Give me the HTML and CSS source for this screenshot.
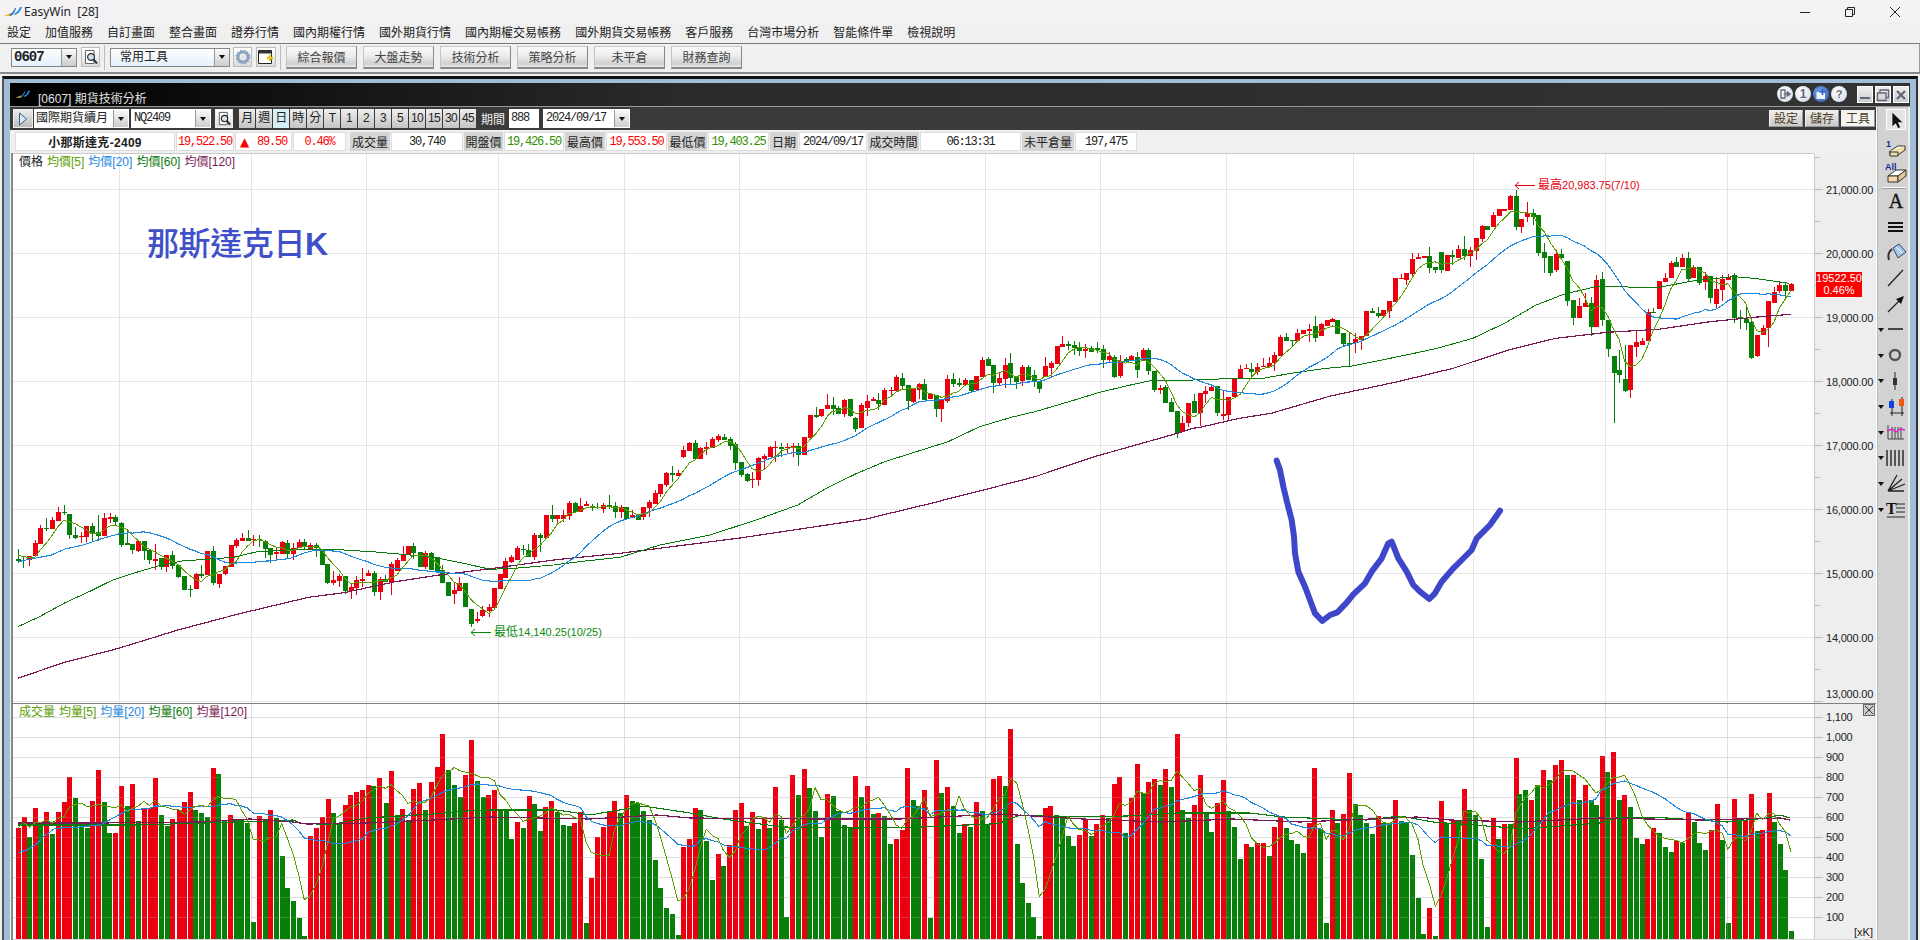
FILE: index.html
```html
<!DOCTYPE html>
<html lang="zh-Hant">
<head>
<meta charset="utf-8">
<title>EasyWin</title>
<link rel="stylesheet" href="styles.css">
</head>
<body>
<div class="app">
  <header class="titlebar">
    <svg class="logo" viewBox="0 0 20 10" width="20" height="10"><path d="M1 9 L8 6 L7 9 Z" fill="#e8b820"/><path d="M6 8 Q10 6 12 1 L13 1 Q12 6 8 9 Z" fill="#2a6fc0"/><path d="M11 7 Q15 5 17 0 L19 0 Q17 6 12 8 Z" fill="#1f8fe0"/></svg>
    <span class="app-name">EasyWin  [28]</span>
    <div class="sys-btns">
      <svg viewBox="0 0 12 12" width="12" height="12"><path d="M1 6.5H11" stroke="#222" stroke-width="1"/></svg>
      <svg viewBox="0 0 12 12" width="12" height="12"><path d="M1.5 3.5H8.5V10.5H1.5Z M3.5 3.5V1.5H10.5V8.5H8.5" fill="none" stroke="#222" stroke-width="1"/></svg>
      <svg viewBox="0 0 12 12" width="12" height="12"><path d="M1 1L11 11M11 1L1 11" stroke="#222" stroke-width="1"/></svg>
    </div>
  </header>
  <nav class="menubar">
    <span>設定</span><span>加值服務</span><span>自訂畫面</span><span>整合畫面</span><span>證券行情</span><span>國內期權行情</span><span>國外期貨行情</span><span>國內期權交易帳務</span><span>國外期貨交易帳務</span><span>客戶服務</span><span>台灣市場分析</span><span>智能條件單</span><span>檢視說明</span>
  </nav>
  <div class="toolbar">
    <div class="combo code"><span class="combo-text">0607</span><span class="dd"></span></div>
    <span class="icon-btn"><svg viewBox="0 0 16 16" width="16" height="16"><path d="M2.5 1.5H11V14.5H2.5Z" fill="#fff" stroke="#666"/><circle cx="8" cy="8" r="3.4" fill="#cfe3f5" stroke="#333" stroke-width="1.2"/><path d="M10.5 10.5L14 14.5" stroke="#333" stroke-width="2"/></svg></span>
    <span class="sep"></span>
    <div class="combo tools"><span class="combo-text">常用工具</span><span class="dd"></span></div>
    <span class="icon-btn gear"><svg viewBox="0 0 16 16" width="16" height="16"><circle cx="8" cy="8" r="5" fill="none" stroke="#8fa5bd" stroke-width="3"/><circle cx="8" cy="8" r="6.6" fill="none" stroke="#8fa5bd" stroke-width="1.6" stroke-dasharray="2 1.5"/><circle cx="8" cy="8" r="2.2" fill="#dbe6f0"/></svg></span>
    <span class="icon-btn cal"><svg viewBox="0 0 18 16" width="18" height="16"><path d="M1.5 1.5H14.5V14.5H1.5Z" fill="#fff" stroke="#222"/><path d="M1.5 1.5H14.5V4.5H1.5Z" fill="#333"/><path d="M13 6V12M10 9H16" stroke="#e8c020" stroke-width="2.4"/></svg></span>
    <span class="sep"></span>
    <div class="tool-buttons">
      <button class="tbtn">綜合報價</button><button class="tbtn">大盤走勢</button><button class="tbtn">技術分析</button><button class="tbtn">策略分析</button><button class="tbtn">未平倉</button><button class="tbtn">財務查詢</button>
    </div>
  </div>
  <main class="mdi">
    <div class="frame">
      <section class="window">
        <div class="win-title">
          <svg class="logo" viewBox="0 0 20 10" width="16" height="9"><path d="M1 9 L8 6 L7 9 Z" fill="#e8b820"/><path d="M6 8 Q10 6 12 1 L13 1 Q12 6 8 9 Z" fill="#2a6fc0"/><path d="M11 7 Q15 5 17 0 L19 0 Q17 6 12 8 Z" fill="#1f8fe0"/></svg>
          <span class="win-name">[0607] 期貨技術分析</span>
          <div class="round-btns">
            <span class="rnd"><svg viewBox="0 0 12 12" width="12" height="12"><path d="M2 2H6V10H2Z" fill="none" stroke="#667" stroke-width="1.3"/><path d="M4.5 6H8V3.5L11.5 6L8 8.5V6" fill="#667" stroke="#667"/></svg></span>
            <span class="rnd num-b">1</span>
            <span class="rnd blue"><svg viewBox="0 0 12 12" width="12" height="12"><path d="M1.5 4H10V11H1.5Z" fill="#fff" opacity=".9"/><path d="M7.5 1V7M4.5 4H10.5" stroke="#2a62c0" stroke-width="1.6"/></svg></span>
            <span class="rnd num-b q">?</span>
          </div>
          <div class="win-btns">
            <span class="wbtn"><svg viewBox="0 0 14 14" width="14" height="14"><path d="M2 10H12" stroke="#667" stroke-width="2"/></svg></span>
            <span class="wbtn"><svg viewBox="0 0 14 14" width="14" height="14"><path d="M1.5 5H10V12.5H1.5Z M4 5V2H12.5V9.5H10" fill="none" stroke="#667" stroke-width="1.3"/></svg></span>
            <span class="wbtn"><svg viewBox="0 0 14 14" width="14" height="14"><path d="M3 3L11 11M11 3L3 11" stroke="#667" stroke-width="2.2"/></svg></span>
          </div>
        </div>
        <div class="win-body">
          <div class="work">
            <div class="dark-bar">
              <span class="play"><svg viewBox="0 0 10 14" width="10" height="14"><path d="M1.5 1L8.5 7L1.5 13Z" fill="#dce8f5" stroke="#3a5f90"/></svg></span>
              <div class="combo dk market"><span class="combo-text">國際期貨續月</span><span class="dd"></span></div>
              <div class="combo dk symbol"><span class="combo-text">NQ2409</span><span class="dd"></span></div>
              <span class="icon-btn small"><svg viewBox="0 0 16 16" width="15" height="15"><path d="M2.5 1.5H11V14.5H2.5Z" fill="#fff" stroke="#555"/><circle cx="8" cy="8" r="3.4" fill="#cfe3f5" stroke="#222" stroke-width="1.2"/><path d="M10.5 10.5L14 14.5" stroke="#222" stroke-width="2"/></svg></span>
              <div class="periods">
                <span class="per">月</span><span class="per">週</span><span class="per on">日</span><span class="per">時</span><span class="per">分</span><span class="per">T</span><span class="per">1</span><span class="per">2</span><span class="per">3</span><span class="per">5</span><span class="per">10</span><span class="per">15</span><span class="per">30</span><span class="per">45</span>
              </div>
              <span class="range-label">期間</span>
              <span class="field count">888</span>
              <div class="combo dk date"><span class="combo-text">2024/09/17</span><span class="dd"></span></div>
              <div class="bar-actions">
                <span class="act">設定</span><span class="act">儲存</span><span class="act on">工具</span>
              </div>
            </div>
            <div class="info">
              <span class="val name">小那斯達克-2409</span>
              <span class="val num up">19,522.50</span>
              <span class="val num up"><i class="tri">▲</i> 89.50</span>
              <span class="val num up">0.46%</span>
              <span class="lab first">成交量</span>
              <span class="val num">30,740</span>
              <span class="lab">開盤價</span>
              <span class="val num dn">19,426.50</span>
              <span class="lab">最高價</span>
              <span class="val num up">19,553.50</span>
              <span class="lab">最低價</span>
              <span class="val num dn">19,403.25</span>
              <span class="lab">日期</span>
              <span class="val num">2024/09/17</span>
              <span class="lab">成交時間</span>
              <span class="val num">06:13:31</span>
              <span class="lab">未平倉量</span>
              <span class="val num">197,475</span>
            </div>
            <div class="charts">
              <div class="pane price">
                <svg id="priceChart" class="chart" viewBox="13 153 1863 551" width="1863" height="551"></svg>
                <div class="legend"><span class="k">價格</span><span class="c5">均價[5]</span><span class="c20">均價[20]</span><span class="c60">均價[60]</span><span class="c120">均價[120]</span></div>
                <div class="big-title">那斯達克日<b>K</b></div>
                <div class="tag">19522.50<br>0.46%</div>
              </div>
              <div class="pane volume">
                <svg id="volumeChart" class="chart" viewBox="13 704 1863 236" width="1863" height="236"></svg>
                <div class="legend vol"><span class="c5">成交量</span><span class="c5">均量[5]</span><span class="c20">均量[20]</span><span class="c60">均量[60]</span><span class="c120">均量[120]</span></div>
                <span class="pane-close"><svg viewBox="0 0 10 10" width="10" height="10"><path d="M1 1L9 9M9 1L1 9" stroke="#333"/></svg></span>
                <span class="unit">[xK]</span>
              </div>
            </div>
          </div>
          <aside class="panel">
            <span class="tool pick"><svg viewBox="0 0 20 20" width="20" height="20"><path d="M6 2V17L9.6 13.6L12.4 19L14.6 18L12 12.6H17Z" fill="#111"/></svg></span>
            <span class="tool"><svg viewBox="0 0 24 22" width="24" height="22"><text x="2" y="9" class="ic-t">1</text><path d="M6 13L14 8H21L14 14H6Z" fill="#fff" stroke="#333"/><path d="M6 13V17H14L21 12V8" fill="#f1dfa8" stroke="#333"/><path d="M6 14H14V18H6Z" fill="#f1dfa8" stroke="#333"/></svg></span>
            <span class="tool mid"><svg viewBox="0 0 24 22" width="24" height="22"><text x="1" y="8" class="ic-t">All</text><path d="M4 14L12 8H22L14 14Z" fill="#fff" stroke="#333"/><path d="M4 14H14V20H4Z" fill="#f6d9b0" stroke="#333"/><path d="M14 14L22 8V14L14 20Z" fill="#e8c898" stroke="#333"/></svg></span>
            <span class="tool-sep"></span>
            <span class="tool"><svg viewBox="0 0 24 22" width="24" height="22"><text x="12" y="18" text-anchor="middle" class="ic-a">A</text></svg></span>
            <span class="tool"><svg viewBox="0 0 24 22" width="24" height="22"><rect x="4" y="6" width="15" height="2" fill="#111"/><rect x="4" y="10" width="15" height="2" fill="#111"/><rect x="4" y="14" width="15" height="2" fill="#111"/></svg></span>
            <span class="tool"><svg viewBox="0 0 24 22" width="24" height="22"><path d="M9 6L15 2L22 10L14 16Z" fill="#a8c8f0" stroke="#345"/><path d="M12 5L18 11" stroke="#fff"/><path d="M8 7Q3 11 5 18" fill="none" stroke="#333" stroke-width="2"/></svg></span>
            <span class="tool"><svg viewBox="0 0 24 22" width="24" height="22"><path d="M4 19L19 3" stroke="#222" stroke-width="1.2"/></svg></span>
            <span class="tool"><svg viewBox="0 0 24 22" width="24" height="22"><path d="M4 19L17 6" stroke="#222" stroke-width="1.2"/><path d="M20 3L12 6L17 11Z" fill="#111"/></svg></span>
            <span class="tool dropdown"><svg viewBox="0 0 24 22" width="24" height="22"><path d="M4 10H19" stroke="#222" stroke-width="1.6"/></svg></span>
            <span class="tool dropdown"><svg viewBox="0 0 24 22" width="24" height="22"><circle cx="11" cy="11" r="5" fill="none" stroke="#555" stroke-width="2.4"/></svg></span>
            <span class="tool dropdown"><svg viewBox="0 0 24 22" width="24" height="22"><path d="M11 2V20" stroke="#222"/><rect x="9" y="8" width="4" height="7" fill="#333"/></svg></span>
            <span class="tool dropdown"><svg viewBox="0 0 24 22" width="24" height="22"><path d="M8 3V14M18 1V14" stroke="#222"/><rect x="5" y="5" width="5" height="7" fill="#1540e0"/><rect x="15" y="3" width="5" height="7" fill="#f05a10"/><path d="M6 17H20M8 14V20M18 14V20" fill="none" stroke="#222"/></svg></span>
            <span class="tool dropdown"><svg viewBox="0 0 24 22" width="24" height="22"><path d="M4 4V18H20M8 6V18M11 6V18M14 6V18M17 6V18" fill="none" stroke="#444"/><path d="M3 10L8 8L12 11L16 8L21 9" fill="none" stroke="#e020d0" stroke-width="1.4"/></svg></span>
            <span class="tool dropdown"><svg viewBox="0 0 24 22" width="24" height="22"><path d="M4 3V19M8 3V19M12 3V19M16 3V19M20 3V19" stroke="#222" stroke-width="1.4" transform="translate(-1 0)"/></svg></span>
            <span class="tool dropdown"><svg viewBox="0 0 24 22" width="24" height="22"><path d="M4 18H20M4 18L13 2M4 18L18 6M4 18L21 11" stroke="#222" stroke-width="1.3"/></svg></span>
            <span class="tool dropdown"><svg viewBox="0 0 24 22" width="24" height="22"><text x="2" y="16" class="ic-tt">T</text><path d="M12 6H21M12 10H21M12 14H21M3 19H21" stroke="#222"/></svg></span>
          </aside>
        </div>
      </section>
    </div>
  </main>
</div>
<script src="chart.js"></script>
</body>
</html>
```
FILE: styles.css
```css
* { box-sizing: border-box; }
html, body { margin: 0; padding: 0; height: 940px; overflow: hidden; }
body { font: 12px "Liberation Sans", "Noto Sans CJK TC", sans-serif; color: #222; background: #f0f0f0; }
.app { display: flex; flex-direction: column; width: 1920px; height: 940px; }

.titlebar { height: 23px; display: flex; align-items: center; padding-left: 3px; background: #f4f2f4; }
.app-name { margin-left: 1px; white-space: pre; font: 12px "Noto Sans", sans-serif; color: #222; }
.sys-btns { margin-left: auto; display: flex; gap: 33px; padding-right: 19px; }

.menubar { height: 20px; display: flex; align-items: center; gap: 14px; padding-left: 7px; background: #f0f0f0; color: #222; }
.menubar span { line-height: 20px; }

.toolbar { height: 29px; display: flex; align-items: center; padding: 0 0 2px 11px; border-top: 1px solid #777; border-right: 1px solid #999; background: #f0f0f0; }
.combo { display: flex; align-items: stretch; height: 19px; border: 1px solid #888; background: linear-gradient(#fff, #e3f0fb); }
.combo-text { flex: 1; padding-left: 2px; line-height: 17px; white-space: nowrap; overflow: hidden; }
.dd { width: 15px; display: flex; align-items: center; justify-content: center; background: linear-gradient(#fafafa, #ccc); border-left: 1px solid #999; }
.dd::after { content: ""; border: 3px solid transparent; border-top: 4px solid #111; border-bottom: 0; }
.code { width: 66px; }
.code .combo-text { font-weight: bold; font-family: "Liberation Mono", monospace; font-size: 14px; letter-spacing: -1px; }
.tools { width: 120px; }
.tools .combo-text { padding-left: 9px; }
.icon-btn { width: 19px; height: 20px; margin-left: 4px; display: flex; align-items: center; justify-content: center; border: 1px solid #bbb; background: linear-gradient(#fff, #ddd); }
.gear { margin-left: 3px; }
.cal { width: 20px; }
.sep { width: 1px; height: 25px; margin: 0 5px 0 4px; background: #bbb; }
.tool-buttons { display: flex; gap: 6px; }
.tbtn { width: 71px; height: 23px; padding: 0; font: inherit; color: #444; border: 1px solid #c4c4c4; border-right-color: #888; border-bottom: 2px solid #888; background: linear-gradient(#fafafa, #ececec 45%, #cfcfcf 85%, #eee); }

.mdi { flex: 1; min-height: 0; border-top: 2px solid #888; padding: 2px 2px 0 2px; background: #f0f0f0; }
.frame { height: 100%; border-top: 3px solid #111; border-left: 2px solid #555; border-right: 2px solid #333; padding: 4px 6px 0 6px; background: #a3bcd9; }
.window { height: 100%; display: flex; flex-direction: column; background: #eee; }

.win-title { height: 24px; display: flex; align-items: center; padding-left: 5px; border-bottom: 1px solid #999; background: linear-gradient(90deg, #000, #2a2a2a 35%, #333); }
.win-name { margin-left: 7px; padding-top: 6px; color: #e4e4e4; }
.round-btns { margin-left: auto; display: flex; gap: 2px; margin-top: -1px; }
.rnd { width: 16px; height: 16px; border-radius: 50%; display: flex; align-items: center; justify-content: center; background: radial-gradient(circle at 40% 35%, #fff, #cdd8e8); color: #667; }
.num-b { font-weight: bold; }
.rnd.blue { background: radial-gradient(circle at 40% 35%, #6f9be0, #2f5fb8); }
.rnd.q { font-size: 11px; }
.win-btns { margin-left: 10px; margin-right: 1px; display: flex; gap: 2px; }
.wbtn { width: 16px; height: 17px; display: flex; align-items: center; justify-content: center; border: 1px solid #fff; background: linear-gradient(#eee, #c9ced4); }

.win-body { flex: 1; min-height: 0; display: flex; }
.work { width: 1866px; display: flex; flex-direction: column; background: #f0f0f0; }

.dark-bar { height: 23px; display: flex; align-items: center; padding-left: 3px; background: #3a3a3a; }
.play { width: 20px; height: 19px; display: flex; align-items: center; justify-content: center; border: 1px solid #eee; background: linear-gradient(#eee, #bbb); }
.combo.dk { height: 19px; border: 1px solid #fff; background: #fff; }
.market { width: 95px; margin-left: 1px; }
.market .combo-text { padding-left: 1px; }
.symbol { width: 80px; margin-left: 2px; font-family: "Liberation Mono", monospace; }
.symbol .combo-text { letter-spacing: -1.2px; }
.icon-btn.small { width: 18px; height: 19px; margin-left: 4px; border-color: #eee; }
.periods { display: flex; gap: 1px; margin-left: 6px; }
.per { width: 16px; height: 19px; line-height: 18px; text-align: center; font-size: 12px; letter-spacing: -.6px; color: #222; background: linear-gradient(#eee, #c4c4c4); }
.per.on { background: #d7eef4; }
.range-label { margin-left: 5px; width: 27px; color: #f0f0f0; }
.field { height: 19px; line-height: 17px; background: #fff; border: 1px solid #fff; }
.count { width: 30px; margin-left: 1px; padding-left: 1px; font-family: "Liberation Mono", monospace; letter-spacing: -1.2px; }
.date { width: 87px; margin-left: 4px; font-family: "Liberation Mono", monospace; }
.date .combo-text { letter-spacing: -1.2px; }
.bar-actions { margin-left: auto; margin-right: 1px; display: flex; gap: 2px; }
.act { width: 34px; height: 17px; line-height: 16px; text-align: center; color: #4a3c20; border: 1px solid #eee; border-right-color: #999; border-bottom-color: #999; background: linear-gradient(#eee, #c8c8c8); }
.act.on { background: #f4f4f4; }

.info { height: 23px; padding: 2px 0 3px 5px; display: grid; gap: 1px; background: #f0f0f0;
  grid-template-columns: 160px 58px 57px 53px 43px 72px 39px 60px 40px 61px 39px 61px 28px 68px 51px 101px 52px 62px; }
.val, .lab { display: flex; align-items: center; justify-content: center; white-space: nowrap; }
.val { background: #fff; border: 1px solid #ddd; }
.lab { background: #d4d4d4; }
.lab.first { margin-left: 3px; }
.name { font-weight: bold; letter-spacing: .3px; }
.num { font-family: "Liberation Mono", "Noto Sans CJK TC", monospace; letter-spacing: -1.2px; white-space: pre; }
.up { color: #f00; }
.dn { color: #2f8f00; }
.tri { font-style: normal; font-family: "DejaVu Sans", sans-serif; margin-right: 2px; letter-spacing: 0; }

.charts { flex: 1; min-height: 0; display: flex; flex-direction: column; margin-left: 1px; border-left: 2px solid #888; }
.pane { position: relative; }
.pane.price { height: 551px; }
.pane.volume { height: 236px; }
.chart { display: block; }
.legend { position: absolute; left: 6px; top: 3px; display: flex; gap: 4px; line-height: 12px; white-space: nowrap; }
.legend.vol { top: 2px; }
.k { color: #222; }
.c5 { color: #5a9e00; }
.c20 { color: #1e88e0; }
.c60 { color: #0a7a0a; }
.c120 { color: #7a1a55; }
.big-title { position: absolute; left: 134px; top: 69px; font-size: 32px; line-height: 38px; font-weight: 500; letter-spacing: -.4px; color: #4050c8; white-space: nowrap; font-family: "Noto Sans CJK TC", sans-serif; }
.big-title b { font-family: "Liberation Sans", sans-serif; font-weight: bold; }
.tag { position: absolute; left: 1803px; top: 119px; width: 46px; height: 25px; font-size: 11px; line-height: 12px; text-align: center; color: #fff; background: #f00; }
.pane-close { position: absolute; left: 1851px; top: 1px; width: 10px; height: 10px; display: flex; background: #ccc; outline: 1px solid #666; }
.unit { position: absolute; left: 1841px; top: 222px; font-size: 11px; line-height: 12px; color: #222; }

.axis-t { font: 11px "Liberation Sans", sans-serif; letter-spacing: -.2px; fill: #222; }
.ann { font: 11px "Liberation Sans", "Noto Sans CJK TC", sans-serif; }
.ann-cjk { font-size: 12px; }

.panel { width: 32px; margin-right: 2px; border-left: 1px solid #fff; display: flex; flex-direction: column; align-items: flex-end; padding: 2px 0 0 0; background: #d2d2d2; box-shadow: inset 1px 0 0 #bbb; }
.tool { position: relative; width: 24px; height: 25.7px; display: flex; align-items: center; justify-content: center; }
.tool.pick { width: 20px; height: 21px; margin-right: 2px; margin-bottom: 6px; border: 1px solid #fff; background: #e4e4e4; }
.tool.mid { margin-top: -2px; }
.tool-sep { width: 24px; height: 1px; background: #fff; box-shadow: 0 1px 0 #999; margin: 2px 2px 0 0; }
.tool.dropdown::before { content: ""; position: absolute; left: -6px; top: 11px; border: 3px solid transparent; border-top: 4px solid #111; border-bottom: 0; }
.ic-t { font: bold 9px "Liberation Sans", sans-serif; fill: #1a2a90; }
.ic-a { font: 20px "Liberation Serif", serif; font-weight: 500; fill: #111; stroke: #111; stroke-width: .4; }
.ic-tt { font: bold 16px "Liberation Serif", serif; fill: #111; }
```
FILE: chart.js
```js
(function () {
  var NS = 'http://www.w3.org/2000/svg';
  var RED = '#ec0010', GREEN = '#087f08';

  function el(parent, tag, attrs, text) {
    var n = document.createElementNS(NS, tag);
    for (var k in attrs) n.setAttribute(k, attrs[k]);
    if (text != null) n.textContent = text;
    parent.appendChild(n);
    return n;
  }
  function line(svg, x1, y1, x2, y2, color) {
    el(svg, 'line', { x1: x1, y1: y1, x2: x2, y2: y2, stroke: color, 'stroke-width': 1, 'shape-rendering': 'crispEdges' });
  }
  function poly(svg, pts, color, w) {
    el(svg, 'polyline', {
      points: pts.map(function (p) { return p[0].toFixed(1) + ',' + p[1].toFixed(1); }).join(' '),
      fill: 'none', stroke: color, 'stroke-width': w, 'shape-rendering': 'crispEdges', 'stroke-linejoin': 'round'
    });
  }
  function rect(svg, x, y, w, h, color, op) {
    var a = { x: x, y: y, width: w, height: Math.max(h, 1), fill: color, 'shape-rendering': 'crispEdges' };
    if (op) a.opacity = op;
    el(svg, 'rect', a);
  }
  function mapPts(list, x0, sx, y0, sy) {
    return list.map(function (p) { return [x0 + p[0] / sx, y0 + p[1] / sy]; });
  }
  function average(items, key, i, n) {
    var s = 0, c = 0;
    for (var j = Math.max(0, i - n + 1); j <= i; j++) { s += items[j][key]; c++; }
    return s / c;
  }

  /* ---- candles: [x, red?, bodyTop, bodyBottom, high, low], measured in crops of the chart ---- */
  var C1 = [[45,0,237,242,208,248],[59,0,240,243,232,265],[74,1,228,240,0,258],[88,1,190,229,180,0],[102,1,144,192,135,0],[116,0,145,148,115,152],[132,1,120,148,110,0],[147,1,95,122,82,0],[161,0,96,100,75,105],[175,0,101,165,0,178],[190,0,165,174,142,178],[204,1,168,172,155,190],[218,1,137,172,0,185],[233,0,137,162,130,185],[248,0,157,167,105,182],[263,1,113,168,100,0],[277,1,112,116,100,130],[292,0,111,126,105,135],[307,0,130,195,125,200],[321,0,188,194,150,0],[335,0,192,210,0,222],[350,1,184,212,0,215],[364,0,184,212,0,240],[378,0,210,240,0,252],[393,1,238,244,192,270],[408,0,235,262,0,270],[421,1,225,262,0,275],[436,0,225,258,212,268],[451,0,254,290,0,295],[466,0,288,330,0,0],[480,0,327,330,315,352],[495,1,283,328,280,0],[509,0,282,288,255,295],[524,1,212,285,0,0],[539,0,212,310,198,315],[553,1,283,312,0,325],[568,1,258,283,0,285],[583,1,195,260,0,0],[597,1,180,198,175,205],[611,1,175,183,160,0],[626,0,175,183,150,0],[641,1,178,180,165,198],[655,0,178,180,165,200],[669,0,182,207,180,235],[684,0,205,224,0,248],[698,1,216,223,205,238],[712,1,185,221,183,0],[727,0,189,223,180,235],[742,1,205,221,190,240],[756,1,187,205,178,0],[770,0,186,199,178,210],[785,1,195,208,188,0],[800,0,195,205,190,232],[814,0,210,255,0,0],[828,0,252,309,0,312],[843,1,300,310,272,315],[858,1,287,304,282,320],[873,0,288,333,0,342],[887,1,321,332,312,358],[901,1,301,323,288,345],[916,1,297,302,265,320],[931,1,279,288,270,0],[945,0,279,336,272,348],[960,1,297,336,290,360],[974,0,297,305,285,0],[988,1,252,308,245,345],[1003,1,240,273,235,0],[1018,1,222,243,198,0],[1032,1,198,224,0,0],[1045,0,198,218,188,238],[1061,0,216,262,0,0],[1075,1,220,260,212,268],[1090,0,220,270,215,0],[1104,0,232,272,0,0],[1118,0,270,310,255,0],[1133,0,305,348,0,0],[1148,1,330,342,305,372],[1162,1,308,332,290,0],[1177,0,308,382,0,0],[1192,0,387,432,0,442],[1206,1,418,424,395,430],[1220,1,390,408,378,412],[1236,1,380,392,372,410],[1250,1,324,384,0,0],[1264,1,282,326,0,0],[1278,1,243,295,235,0],[1293,1,231,245,225,250],[1308,1,203,240,198,0],[1322,0,208,211,195,225],[1336,0,210,230,192,0],[1351,1,165,232,158,240],[1366,0,165,173,158,215],[1380,1,105,175,0,0],[1395,0,105,117,75,125],[1409,1,105,117,0,128],[1424,1,105,118,90,125],[1438,1,68,108,62,120],[1453,0,68,97,65,100],[1468,1,78,95,55,0],[1482,1,72,78,62,0],[1497,0,78,85,72,92],[1511,0,80,85,70,88],[1526,1,75,86,70,100],[1540,0,75,80,45,88]];
  var C2 = [[37,0,618,635,605,655],[52,1,622,636,615,653],[67,0,622,658,0,660],[81,1,645,655,630,0],[95,0,645,660,0,0],[110,1,622,650,0,660],[124,1,607,625,600,650],[138,1,578,612,570,0],[153,1,552,582,0,590],[168,1,519,555,515,560],[182,0,519,525,498,545],[196,1,519,528,510,0],[211,1,450,471,437,475],[226,1,429,452,425,0],[241,0,429,477,420,0],[254,1,444,476,440,0],[269,1,441,447,427,465],[284,1,417,444,412,0],[298,1,408,420,402,425],[313,0,411,420,402,0],[328,0,418,437,410,450],[342,0,431,488,425,510],[357,0,486,525,0,530],[371,0,522,543,520,545],[385,1,537,541,515,563],[400,1,474,540,470,558],[415,1,468,477,462,508],[429,1,441,472,438,0],[443,1,441,445,423,485],[458,0,441,446,428,470],[472,1,441,445,428,462],[487,1,438,444,430,470],[502,0,438,465,430,497],[516,1,411,466,0,0],[530,1,345,414,0,0],[545,0,345,351,322,355],[560,1,327,348,0,352],[574,1,316,328,282,0],[588,0,316,327,292,345],[603,0,324,342,318,0],[618,1,300,342,296,350],[632,0,296,347,0,352],[646,0,354,387,350,395],[660,1,315,385,310,0],[675,1,303,325,285,348],[690,1,296,304,290,0],[704,0,300,312,280,330],[719,1,270,316,265,0],[735,1,270,272,262,285],[749,1,232,273,225,0],[763,0,234,258,220,270],[778,0,255,302,0,330],[792,1,267,305,0,310],[806,1,252,270,248,298],[820,0,252,300,237,0],[835,1,282,297,0,0],[850,0,286,327,0,350],[863,1,298,327,0,365],[878,1,237,303,225,308],[893,0,237,252,218,262],[908,0,250,256,235,262],[922,1,240,255,235,0],[937,0,240,273,0,280],[952,1,228,270,0,0],[966,1,180,231,172,0],[980,0,177,198,170,0],[995,0,195,248,0,278],[1010,1,235,248,220,258],[1024,1,195,237,175,265],[1038,0,190,233,160,255],[1053,0,231,246,0,268],[1068,1,201,243,195,258],[1082,0,201,240,195,0],[1097,0,226,243,210,262],[1111,0,242,267,0,280],[1125,1,198,232,170,0],[1140,1,188,205,182,235],[1155,1,138,192,0,0],[1169,1,132,142,108,0],[1184,0,132,137,122,150],[1198,0,135,145,124,165],[1212,0,140,153,125,168],[1227,1,147,152,132,175],[1242,0,145,156,137,0],[1256,0,143,150,125,160],[1271,0,147,180,135,205],[1286,1,167,180,155,190],[1300,0,170,232,165,235],[1314,1,183,228,165,235],[1329,0,177,185,172,0],[1344,1,168,184,165,0],[1358,0,170,210,155,235],[1372,1,150,182,145,0],[1386,0,150,213,145,225],[1402,0,212,270,0,275],[1416,1,263,270,255,283],[1430,0,260,308,255,310],[1445,0,306,336,295,0],[1459,0,333,398,0,415],[1473,1,369,397,348,0],[1488,1,309,368,0,380],[1503,0,303,340,282,0],[1517,1,279,338,0,378],[1531,1,273,283,258,310],[1546,1,260,273,255,0]];
  var C3 = [[43,0,648,728,0,737],[58,1,732,737,660,750],[72,1,682,735,0,752],[87,1,627,682,0,0],[102,1,597,627,585,0],[116,1,594,598,583,0],[130,0,598,606,580,620],[145,1,591,605,578,615],[160,1,588,592,565,0],[174,1,580,591,560,0],[188,1,555,580,545,602],[203,1,501,558,495,0],[217,0,501,512,490,0],[232,0,510,512,0,530],[246,1,490,513,478,0],[261,1,480,492,0,0],[276,1,477,482,462,515],[290,0,468,503,438,515],[305,1,462,497,460,0],[320,1,450,467,0,0],[335,1,448,455,445,0],[347,0,450,492,0,0],[362,0,488,521,0,530],[378,0,520,525,490,588],[392,1,507,520,490,550],[406,1,498,510,0,540],[421,1,423,498,0,0],[436,0,423,430,415,0],[450,0,430,437,412,445],[464,1,420,437,0,445],[478,1,393,422,0,445],[494,1,324,396,0,0],[508,1,323,328,312,0],[522,1,308,330,0,345],[537,1,266,312,250,320],[551,1,262,267,250,0],[566,1,257,265,0,0],[580,0,258,294,232,310],[595,0,290,300,0,310],[610,0,245,300,0,310],[624,1,254,302,0,0],[638,0,255,261,240,285],[653,1,237,264,225,0],[668,0,237,259,198,270],[682,1,240,258,232,290],[697,1,204,242,0,270],[712,1,168,207,165,215],[726,0,168,180,0,0],[740,1,135,170,125,0],[755,1,118,138,0,0],[770,1,118,122,0,0],[785,1,78,120,75,0],[798,0,78,172,60,180],[813,1,148,172,0,188],[828,1,130,140,97,155],[842,0,129,140,118,165],[856,0,135,248,0,258],[871,0,247,263,220,310],[886,0,258,310,0,318],[900,1,252,300,240,305],[914,0,252,263,238,0],[929,0,273,392,0,408],[943,0,390,444,0,465],[958,1,408,444,385,0],[973,1,399,410,370,0],[988,0,399,470,380,497],[1002,1,330,470,316,0],[1016,0,327,450,305,468],[1031,0,450,536,0,562],[1046,0,558,608,0,758],[1060,0,600,615,540,640],[1074,0,628,663,525,665],[1088,1,525,660,0,684],[1103,1,515,530,482,560],[1118,1,513,525,505,0],[1132,1,425,513,418,0],[1146,0,425,430,415,0],[1162,1,333,417,0,0],[1176,1,323,336,310,0],[1190,1,280,323,272,0],[1205,0,277,290,260,0],[1219,1,265,292,252,0],[1233,0,265,327,246,335],[1248,1,292,324,285,0],[1263,0,292,338,290,345],[1277,1,318,335,305,360],[1291,0,318,383,0,400],[1306,1,357,403,320,415],[1321,1,327,360,315,392],[1335,1,320,330,312,0],[1350,0,315,444,310,460],[1365,0,442,448,420,478],[1380,0,447,458,410,480],[1394,0,456,565,448,568],[1408,1,495,557,0,562],[1423,1,475,494,465,0],[1437,1,393,473,0,530],[1451,1,365,398,352,0],[1465,1,345,362,332,370],[1480,0,345,362,335,388],[1495,1,342,362,338,0]];

  function candles(list, x0, y0) {
    return list.map(function (c) {
      var top = y0 + c[2] / 3, bot = y0 + c[3] / 3;
      return {
        x: x0 + c[0] / 2.529, red: c[1], top: top, bot: bot,
        hi: c[4] ? y0 + c[4] / 3 : top, lo: c[5] ? y0 + c[5] / 3 : bot,
        close: c[1] ? top : bot
      };
    });
  }
  var K = candles(C1, 0, 480).concat(candles(C2, 600, 300), candles(C3, 1200, 170));

  /* ---- slow averages, traced from the chart ---- */
  var MA20start = mapPts([[45,245],[75,238],[130,225],[165,207],[210,195],[260,175],[300,162],[330,158]], 0, 2.529, 480, 3);
  var MA60 = mapPts([[45,440],[100,410],[165,368],[225,335],[285,300],[350,275],[400,258],[460,243],[520,238],[590,232],[650,215],[720,210],[800,208],[870,210],[950,216],[1030,224],[1110,235],[1180,252],[1240,268],[1300,265],[1400,255],[1480,243],[1568,232]], 0, 2.529, 480, 3)
    .concat([[660,545],[710,535]], mapPts([[400,658],[500,615],[580,560],[650,520],[720,485],[800,455],[880,425],[960,380],[1040,352],[1100,335],[1200,300],[1260,278],[1330,258],[1400,240],[1500,240]], 600, 2.529, 300, 3))
    .concat(mapPts([[0,628],[160,625],[230,610],[320,595],[385,588],[460,570],[530,553],[600,535],[690,505],[770,460],[850,405],[920,373],[1000,350],[1160,352],[1260,330],[1350,320],[1400,325],[1490,340]], 1200, 2.529, 170, 3));
  var MA120 = mapPts([[45,595],[160,548],[300,505],[450,450],[600,403],[780,352],[870,338],[1000,305],[1110,285],[1230,268],[1400,240],[1568,220]], 0, 2.529, 480, 3)
    .concat([[740,538]], mapPts([[670,658],[830,612],[970,570],[1100,530],[1250,470],[1400,420],[1460,400],[1500,385]], 600, 2.529, 300, 3))
    .concat(mapPts([[0,772],[100,745],[180,730],[330,678],[500,635],[640,595],[780,540],[900,505],[1030,487],[1160,478],[1290,455],[1400,442],[1495,433]], 1200, 2.529, 170, 3));

  /* ---- volume: [x, red?, barTop] ---- */
  var V1 = [[54,1,414],[71,1,381],[88,0,440],[106,1,354],[121,0,405],[139,1,366],[157,0,432],[174,1,366],[191,1,336],[208,1,261],[226,0,324],[243,0,408],[260,0,414],[277,1,333],[295,1,240],[312,0,336],[328,0,429],[346,1,429],[364,1,288],[381,0,348],[397,1,282],[415,0,393],[432,1,357],[449,1,354],[466,1,264],[484,0,375],[501,0,408],[517,1,387],[536,1,360],[553,1,336],[570,1,306],[586,0,360],[604,0,369],[622,0,381],[639,1,234],[655,0,252],[672,0,390],[690,1,375],[707,0,387],[724,0,390],[742,0,399],[760,0,696],[777,1,378],[794,0,387],[811,1,360],[828,0,384],[845,0,498],[862,0,594],[880,0,633],[897,0,684],[913,0,738],[931,1,438],[949,1,414],[966,1,381],[983,1,327],[1000,0,369],[1018,0,399],[1035,1,345],[1051,1,315],[1069,1,306],[1087,1,300],[1104,1,285],[1120,0,288],[1138,1,264],[1157,0,339],[1173,1,243],[1190,0,375],[1207,1,357],[1224,0,390],[1240,1,297],[1258,1,279],[1276,0,360],[1294,1,276],[1310,1,231],[1327,1,132],[1345,0,240],[1362,0,285],[1379,0,321],[1396,1,255],[1414,1,150],[1431,0,273],[1448,0,321],[1465,1,315],[1483,1,300]];
  var V2 = [[30,0,327],[47,0,330],[64,0,417],[82,1,366],[99,0,384],[116,1,288],[133,0,312],[150,0,393],[166,1,321],[184,1,303],[202,0,336],[219,0,375],[236,0,378],[253,1,369],[271,1,336],[288,0,669],[304,1,534],[322,1,411],[340,1,381],[358,1,333],[373,1,303],[390,0,339],[409,1,285],[426,0,303],[442,0,309],[460,0,333],[477,0,360],[494,0,480],[511,0,564],[529,0,624],[546,0,642],[563,0,705],[580,1,441],[598,1,417],[615,1,324],[631,0,330],[649,0,423],[667,0,540],[684,1,462],[700,0,498],[718,1,435],[736,1,330],[752,1,309],[769,0,378],[787,1,336],[805,0,387],[822,1,351],[838,0,384],[856,1,261],[873,0,360],[889,0,651],[907,1,225],[925,0,285],[943,1,207],[958,0,264],[975,0,333],[994,0,411],[1011,1,282],[1028,0,288],[1045,0,333],[1063,0,375],[1080,0,381],[1096,1,228],[1114,0,291],[1132,1,258],[1149,0,342],[1165,1,339],[1183,0,348],[1201,0,432],[1219,1,417],[1235,1,390],[1252,1,204],[1269,0,300],[1285,0,318],[1303,1,270],[1321,0,654],[1339,1,180],[1354,0,279],[1372,1,261],[1390,0,318],[1407,0,399],[1423,1,372],[1441,0,381],[1459,1,306],[1476,0,333],[1492,0,372],[1510,1,237],[1528,1,228],[1545,0,258]];
  var V3 = [[31,1,87],[50,0,432],[67,0,549],[84,0,609],[100,0,651],[118,0,708],[135,1,324],[151,1,318],[169,0,345],[187,0,350],[204,0,408],[220,0,438],[238,1,405],[256,1,357],[273,0,408],[289,1,372],[307,1,345],[325,0,354],[342,1,252],[358,1,231],[376,0,399],[394,1,294],[411,1,192],[428,0,279],[445,1,246],[463,1,237],[480,0,255],[496,1,207],[514,0,261],[531,1,102],[547,0,330],[565,0,354],[583,1,315],[600,1,225],[617,0,336],[634,0,396],[652,1,309],[668,1,240],[685,0,333],[703,0,381],[721,0,477],[738,1,432],[754,0,441],[772,1,429],[790,1,429],[807,0,468],[823,1,381],[841,1,351],[858,0,384],[874,0,420],[892,0,432],[910,0,459],[927,1,369],[943,1,204],[961,0,387],[979,0,669],[996,1,330],[1012,0,369],[1030,1,342],[1048,1,219],[1065,0,312],[1081,0,345],[1099,0,369],[1117,0,402],[1135,1,348],[1150,0,369],[1168,0,372],[1186,1,300],[1203,0,363],[1219,0,369],[1237,0,465],[1254,0,594],[1270,0,702],[1288,1,624],[1306,0,708],[1323,1,303],[1339,0,369],[1358,1,363],[1375,0,363],[1392,1,267],[1408,0,330],[1426,0,345],[1444,0,477],[1460,0,681],[1478,1,354],[1495,0,417],[1513,1,372],[1530,0,372],[1547,1,174]];
  var V4 = [[1519,0,794],[1525,0,790],[1531,1,800],[1537,0,785],[1543,1,770],[1549,0,780],[1555,1,765],[1561,1,760],[1567,0,775],[1573,1,775],[1579,0,800],[1585,1,785],[1591,0,800],[1596,0,805]];
  var V5 = [[5,1,198],[22,0,246],[40,1,186],[57,0,330],[73,1,315],[91,0,351],[109,0,444],[127,0,462],[142,1,447],[160,1,414],[178,0,429],[195,0,471],[212,0,486],[229,1,453],[246,0,459],[263,1,366],[281,0,396],[298,0,459],[315,0,480],[332,1,420],[350,1,342],[367,0,450],[384,0,699],[401,1,327],[418,0,393],[436,1,393],[453,1,312],[470,0,423],[487,1,420],[506,1,309],[522,0,396],[539,0,462],[556,0,540],[573,0,723]];

  function bars(list, x0, sx, y0, sy) {
    return list.map(function (b) { return { x: x0 + b[0] / sx, red: b[1], top: y0 + b[2] / sy }; });
  }
  var VOL = bars(V1, 0, 3, 690, 3).concat(bars(V2, 490, 3, 700, 3), bars(V3, 1000, 3, 700, 3), bars(V4, 0, 1, 0, 1), bars(V5, 1600, 3, 690, 3));

  var VMA20start = mapPts([[55,488],[80,480],[110,462],[130,440],[165,415],[230,412],[300,405],[390,357]], 0, 3, 690, 3);
  var VMA60 = [[18,825],[100,825],[140,825],[267,821],[293,820],[300,823],[333,825],[343,822],[367,818],[433,814],[467,811],[490,810],[523,810],[557,810],[577,813],[590,815],[643,806],[690,813],[723,819],[783,827],[857,828],[923,827],[990,824],[1000,823],[1020,815],[1067,817],[1127,816],[1177,813],[1250,813],[1283,817],[1333,819],[1367,820],[1400,816],[1433,822],[1500,827],[1520,829],[1600,823],[1620,817],[1667,818],[1727,822],[1767,818],[1780,815],[1790,818]];
  var VMA120 = [[18,823],[100,823],[200,822],[250,819],[293,822],[307,824],[367,823],[433,820],[490,817],[590,819],[657,815],[690,818],[823,819],[900,819],[1000,814],[1033,816],[1083,819],[1160,822],[1233,819],[1300,822],[1417,817],[1450,820],[1520,822],[1600,818],[1700,820],[1780,818],[1790,820]];

  /* ---- price pane ---- */
  var VERT = [119, 251, 366, 498, 624, 739, 866, 985, 1100, 1226, 1353, 1473, 1605, 1727];
  var PLOT_L = 13, PLOT_R = 1814;

  function frame(svg, top, bottom) {
    rect(svg, PLOT_L, top, 1863, bottom - top, '#eeeeee');
    rect(svg, PLOT_L, top, PLOT_R - PLOT_L, bottom - top, '#ffffff');
    VERT.forEach(function (x) { line(svg, x + 0.5, top, x + 0.5, bottom, '#e6e6e6'); });
    line(svg, PLOT_R + 0.5, top, PLOT_R + 0.5, bottom, '#c8c8c8');
  }

  var P = document.getElementById('priceChart');
  frame(P, 154, 703);
  line(P, PLOT_L, 153.5, PLOT_R, 153.5, '#c8c8c8');
  for (var lv = 21500; lv >= 13000; lv -= 500) {
    var yy = Math.round(189 + (21000 - lv) * 0.064) + 0.5;
    var major = lv % 1000 === 0;
    if (major) line(P, PLOT_L, yy, PLOT_R, yy, '#e6e6e6');
    line(P, PLOT_R, yy, PLOT_R + (major ? 9 : 6), yy, '#bbbbbb');
    /* the lowest label sits above its tick so it stays inside the pane */
    if (major) el(P, 'text', { x: 1826, y: lv === 13000 ? 698 : yy + 4, 'class': 'axis-t' }, (lv / 1000).toFixed(0) + ',000.00');
  }
  line(P, 13, 703.5, 1876, 703.5, '#808080');

  K.forEach(function (c) {
    var xc = Math.round(c.x), col = c.red ? RED : GREEN;
    rect(P, xc, c.hi, 1, c.lo - c.hi, col);
    rect(P, xc - 2, c.top, 5, c.bot - c.top, col);
  });

  poly(P, MA120, '#7a1a55', 1.2);
  poly(P, MA60, '#0a7a0a', 1);

  var ma20 = MA20start.slice();
  var ma5 = [];
  K.forEach(function (c, idx) {
    if (idx >= 20) ma20.push([c.x, average(K, 'close', idx, 20)]);
    if (idx >= 4) ma5.push([c.x, average(K, 'close', idx, 5)]);
    else ma5.push([c.x, 480 + [225, 230, 232, 232][idx] / 3]);
  });
  poly(P, ma20, '#1e88e0', 1.1);
  poly(P, ma5, '#5a9e00', 1);

  /* high / low notes */
  function note(x, y, color, label, rest) {
    line(P, x, y + 0.5, x + 20, y + 0.5, color);
    el(P, 'path', { d: 'M' + (x + 4) + ' ' + (y - 3) + 'L' + x + ' ' + (y + 0.5) + 'L' + (x + 4) + ' ' + (y + 4), fill: 'none', stroke: color });
    var t = el(P, 'text', { x: x + 23, y: y + 4, fill: color, 'class': 'ann' });
    el(t, 'tspan', { 'class': 'ann-cjk' }, label);
    el(t, 'tspan', {}, rest);
  }
  note(1515, 185, '#e80010', '最高', '20,983.75(7/10)');
  note(471, 632, '#0a8a0a', '最低', '14,140.25(10/25)');

  /* hand-drawn W */
  el(P, 'polyline', {
    points: mapPts([[80,62],[90,90],[100,140],[112,190],[125,240],[132,290],[135,340],[145,395],[165,440],[180,480],[195,520],[217,543],[240,525],[262,517],[290,488],[310,463],[345,430],[365,395],[395,355],[415,310],[425,305],[445,355],[470,395],[490,435],[510,455],[538,477],[555,460],[575,425],[610,385],[665,330],[680,295],[720,255],[750,212]], 1250, 3, 440, 3)
      .map(function (p) { return p[0] + ',' + p[1]; }).join(' '),
    fill: 'none', stroke: '#3e47c9', 'stroke-width': 6, 'stroke-linecap': 'round', 'stroke-linejoin': 'round'
  });

  /* ---- volume pane ---- */
  var S = document.getElementById('volumeChart');
  frame(S, 704, 940);
  var levels = ['1,100', '1,000', '900', '800', '700', '600', '500', '400', '300', '200', '100'];
  levels.forEach(function (label, n) {
    var yy = 717.5 + n * 20;
    line(S, PLOT_L, yy, PLOT_R, yy, '#e6e6e6');
    line(S, PLOT_R, yy, PLOT_R + 9, yy, '#bbbbbb');
    el(S, 'text', { x: 1826, y: yy + 3, 'class': 'axis-t' }, label);
  });
  VOL.forEach(function (b) {
    rect(S, Math.round(b.x) - 2, b.top, 5, 939 - b.top, b.red ? RED : GREEN);
  });
  levels.forEach(function (label, n) {
    rect(S, PLOT_L, 717 + n * 20, PLOT_R - PLOT_L, 1, '#c8c8c8', 0.22);
  });
  VERT.forEach(function (x) { rect(S, x, 704, 1, 236, '#c8c8c8', 0.18); });
  line(S, PLOT_L, 939.5, 1876, 939.5, '#d8d8d8');

  var vma20 = VMA20start.slice(), vma5 = [];
  VOL.forEach(function (b, idx) {
    if (idx >= 20) vma20.push([b.x, average(VOL, 'top', idx, 20)]);
    vma5.push([b.x, average(VOL, 'top', idx, 5)]);
  });
  poly(S, VMA60, '#0a7a0a', 1.1);
  poly(S, VMA120, '#7a1a55', 1.2);
  poly(S, vma20, '#1e88e0', 1.1);
  poly(S, vma5, '#5a9e00', 1);
})();
```
